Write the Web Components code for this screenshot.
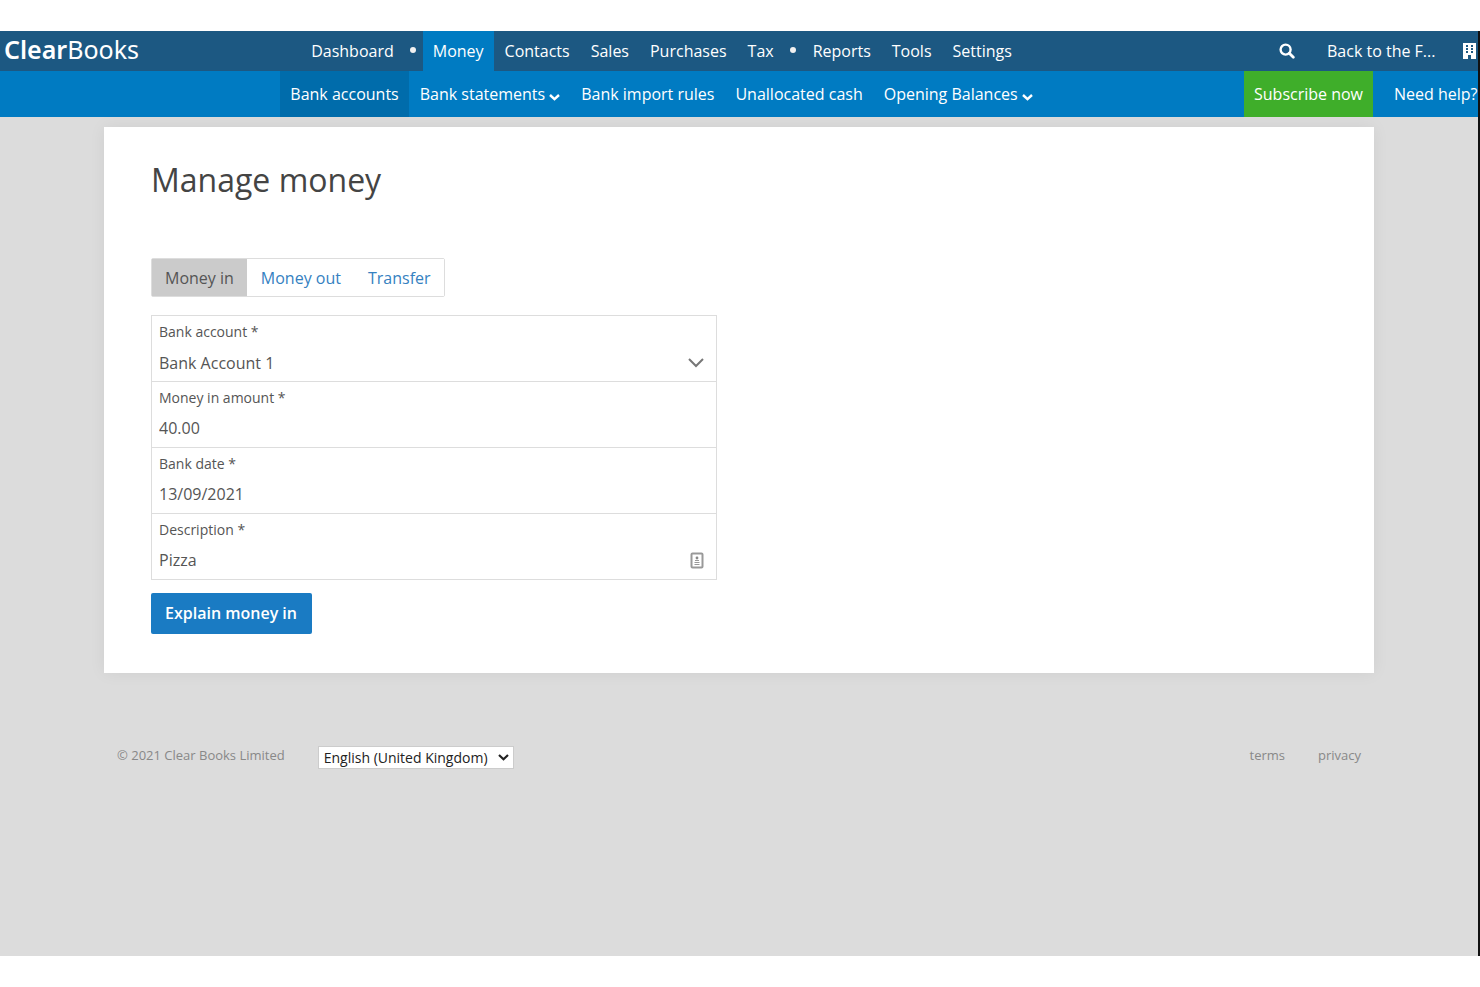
<!DOCTYPE html>
<html lang="en-GB">
<head>
<meta charset="utf-8">
<meta name="viewport" content="width=device-width, initial-scale=1">
<title>Manage money - Clear Books</title>
<style>
  body {
    margin: 0;
    background: #fff;
    color: #555;
    font-family: 'Open Sans', sans-serif;
    font-size: 16px;
    overflow-x: hidden;
  }
</style>
</head>
<body>
<clear-books-app></clear-books-app>

<script>
class NavItem extends HTMLElement {
  constructor() {
    super();
    this.attachShadow({ mode: 'open' });
  }

  connectedCallback() {
    const chevron = this.hasAttribute('menu')
      ? '<svg width="11" height="7" viewBox="0 0 11 7"><path d="M1 1l4.5 4.2L10 1" fill="none" stroke="currentColor" stroke-width="2.4"/></svg>'
      : '';

    this.shadowRoot.innerHTML = `
      <style>
        :host {
          display: flex;
        }
        a {
          display: flex;
          align-items: center;
          gap: 4px;
          padding: 0 10px;
          color: #fff;
          text-decoration: none;
          white-space: nowrap;
        }
        :host([active]) a {
          background: var(--active-bg);
        }
        :host([highlight]) a {
          background: #3fae2a;
        }
        svg {
          margin-top: 6px;
        }
      </style>
      <a href="${this.getAttribute('href') || '#'}"><slot></slot>${chevron}</a>
    `;
  }
}

class NavBar extends HTMLElement {
  constructor() {
    super();
    this.attachShadow({ mode: 'open' });
    this.shadowRoot.innerHTML = `
      <style>
        :host {
          display: grid;
          grid-template-columns: 140px 1fr 295px;
          height: var(--bar-height);
          background: var(--bar-bg);
          color: #fff;
          line-height: 22px;
        }
        nav {
          display: flex;
          justify-content: center;
          gap: 1px;
        }
        .actions {
          display: flex;
          padding-left: 61px;
          overflow: hidden;
        }
      </style>
      <div><slot name="brand"></slot></div>
      <nav><slot></slot></nav>
      <div class="actions"><slot name="actions"></slot></div>
    `;
  }
}

class BrandLogo extends HTMLElement {
  constructor() {
    super();
    this.attachShadow({ mode: 'open' });
    this.shadowRoot.innerHTML = `
      <style>
        :host {
          display: block;
        }
        a {
          display: block;
          padding-left: 4px;
          color: #fff;
          font-family: 'Noto Sans', sans-serif;
          font-size: 25px;
          line-height: 36px;
          text-decoration: none;
          white-space: nowrap;
        }
        b {
          font-weight: 600;
        }
      </style>
      <a href="#home"><b>Clear</b>Books</a>
    `;
  }
}

class TopTools extends HTMLElement {
  constructor() {
    super();
    this.attachShadow({ mode: 'open' });
    this.shadowRoot.innerHTML = `
      <style>
        :host {
          display: flex;
          align-items: center;
          padding-left: 35px;
        }
        button {
          display: flex;
          padding: 0;
          border: 0;
          background: none;
          color: inherit;
          cursor: pointer;
        }
        a {
          flex: none;
          margin: 0 28px 0 32px;
          color: inherit;
          text-decoration: none;
        }
      </style>
      <button aria-label="Search">
        <svg width="16" height="16" viewBox="0 0 16 16" fill="none" stroke="currentColor">
          <circle cx="6.6" cy="6.6" r="5" stroke-width="2.4"/>
          <path d="M10.3 10.3l4 4" stroke-width="2.8" stroke-linecap="round"/>
        </svg>
      </button>
      <a href="#business">Back to the F...</a>
      <button aria-label="Businesses">
        <svg width="13" height="16" viewBox="0 0 13 16">
          <path fill="currentColor" fill-rule="evenodd" d="M0 0h13v16H8v-4H5v4H0zM3 2v2h2V2zM8 2v2h2V2zM3 5v2h2V5zM8 5v2h2V5zM3 8v2h2V8zM8 8v2h2V8z"/>
        </svg>
      </button>
    `;
  }
}

class NavDot extends HTMLElement {
  constructor() {
    super();
    this.attachShadow({ mode: 'open' });
    this.shadowRoot.innerHTML = `
      <style>
        :host {
          display: flex;
          align-items: center;
          justify-content: center;
          width: 17px;
        }
        i {
          width: 6px;
          height: 6px;
          margin-bottom: 2px;
          border-radius: 50%;
          background: #f1f1f1;
        }
      </style>
      <i></i>
    `;
  }
}

class TabGroup extends HTMLElement {
  constructor() {
    super();
    this.attachShadow({ mode: 'open' });
  }

  connectedCallback() {
    const tabs = this.getAttribute('tabs').split(',');
    this.shadowRoot.innerHTML = `
      <style>
        :host {
          display: block;
        }
        div {
          display: inline-flex;
          gap: 1px;
          border: 1px solid #ddd;
          border-radius: 2px;
          vertical-align: top;
        }
        button {
          padding: 1px 13px 0;
          border: 0;
          background: #fff;
          color: #3581c1;
          font: inherit;
          line-height: 36px;
          cursor: pointer;
        }
        button[aria-selected="true"] {
          background: #cbcbcb;
          color: #555;
        }
      </style>
      <div role="tablist">
        ${tabs.map((tab, i) => `<button role="tab" aria-selected="${i === 0}">${tab}</button>`).join('')}
      </div>
    `;
    this.shadowRoot.querySelectorAll('button').forEach(button => {
      button.addEventListener('click', () => this.select(button));
    });
  }

  select(selected) {
    this.shadowRoot.querySelectorAll('button').forEach(button => {
      button.setAttribute('aria-selected', button === selected);
    });
  }
}

class FormField extends HTMLElement {
  constructor() {
    super();
    this.attachShadow({ mode: 'open' });
  }

  connectedCallback() {
    const value = this.getAttribute('value');
    let control = `<input id="control" type="text" value="${value}">`;
    let icon = '';

    if (this.getAttribute('type') === 'select') {
      control = `<select id="control"><option>${value}</option></select>`;
      icon = '<svg width="16" height="10" viewBox="0 0 16 10"><path d="M1 1l7 7 7-7" fill="none" stroke="#777" stroke-width="2"/></svg>';
    } else if (this.hasAttribute('autofill')) {
      icon = `
        <svg width="14" height="17" viewBox="0 0 14 17">
          <rect x="1.5" y="1.5" width="11" height="14" rx="1" fill="#fff" stroke="#999" stroke-width="2"/>
          <circle cx="7" cy="6" r="1.4" fill="#888"/>
          <path d="M5 8.5h4M4.5 10.5h5M4.5 12.5h5" stroke="#999"/>
        </svg>`;
    }

    this.shadowRoot.innerHTML = `
      <style>
        :host {
          display: block;
          padding: 6px 7px 0;
          border-bottom: 1px solid #ddd;
        }
        label {
          display: block;
          font-size: 14px;
          line-height: 20px;
        }
        .control {
          display: flex;
          align-items: center;
          height: 39px;
          padding-right: 4px;
        }
        input,
        select {
          flex: 1;
          min-width: 0;
          height: 28px;
          margin: 0;
          padding: 0;
          border: 0;
          outline: 0;
          appearance: none;
          background: transparent;
          color: inherit;
          font: inherit;
        }
        select {
          height: 30px;
          padding-top: 2px;
        }
        svg {
          flex: none;
          margin: 2px 1px 0 0;
          pointer-events: none;
        }
      </style>
      <label for="control">${this.getAttribute('label')} *</label>
      <div class="control">${control}${icon}</div>
    `;
  }
}

class MoneyForm extends HTMLElement {
  constructor() {
    super();
    this.attachShadow({ mode: 'open' });
    this.shadowRoot.innerHTML = `
      <style>
        :host {
          display: block;
        }
        .fields {
          max-width: 564px;
          margin: 18px 0 13px;
          border: 1px solid #ddd;
          border-bottom: 0;
        }
        button {
          padding: 0 15px 0 14px;
          border: 0;
          border-radius: 2px;
          background: #1a7bc3;
          color: #fff;
          font: inherit;
          font-weight: 600;
          line-height: 41px;
          cursor: pointer;
        }
      </style>
      <tab-group tabs="Money in,Money out,Transfer"></tab-group>
      <form>
        <div class="fields">
          <form-field type="select" label="Bank account" value="Bank Account 1"></form-field>
          <form-field label="Money in amount" value="40.00"></form-field>
          <form-field label="Bank date" value="13/09/2021"></form-field>
          <form-field label="Description" value="Pizza" autofill></form-field>
        </div>
        <button type="button">Explain money in</button>
      </form>
    `;
  }
}

class PageCard extends HTMLElement {
  constructor() {
    super();
    this.attachShadow({ mode: 'open' });
    this.shadowRoot.innerHTML = `
      <style>
        :host {
          display: block;
          padding: 31px 47px 39px;
          background: #fff;
          box-shadow: 0 0 16px rgba(0, 0, 0, 0.06);
        }
        h1 {
          margin: 0 0 56px;
          color: #444;
          font-size: 32px;
          font-weight: 400;
          line-height: 44px;
        }
      </style>
      <h1><slot name="title"></slot></h1>
      <slot></slot>
    `;
  }
}

class PageFooter extends HTMLElement {
  constructor() {
    super();
    this.attachShadow({ mode: 'open' });
    this.shadowRoot.innerHTML = `
      <style>
        :host {
          display: flex;
          align-items: flex-start;
          gap: 33px;
          padding: 0 13px;
          color: #888;
          font-size: 13px;
          line-height: 18px;
        }
        a {
          color: inherit;
          text-decoration: none;
        }
        .picker {
          display: grid;
          align-items: center;
        }
        .picker > * {
          grid-area: 1 / 1;
        }
        select {
          height: 23px;
          padding: 0 25px 0 5px;
          border: 1px solid #ccc;
          border-radius: 0;
          appearance: none;
          background: #fff;
          color: #222;
          font: inherit;
          font-size: 14px;
        }
        svg {
          justify-self: end;
          margin-right: 5px;
          pointer-events: none;
        }
        .links {
          display: flex;
          gap: 33px;
          margin-left: auto;
        }
      </style>
      <span>© 2021 Clear Books Limited</span>
      <div class="picker">
        <select aria-label="Language"><option>English (United Kingdom)</option></select>
        <svg width="11" height="7" viewBox="0 0 11 7"><path d="M1 1l4.5 4.2L10 1" fill="none" stroke="#222" stroke-width="2.2"/></svg>
      </div>
      <div class="links">
        <a href="#terms">terms</a>
        <a href="#privacy">privacy</a>
      </div>
    `;
  }
}

class ClearBooksApp extends HTMLElement {
  constructor() {
    super();
    this.attachShadow({ mode: 'open' });
    this.shadowRoot.innerHTML = `
      <style>
        :host {
          display: block;
          box-sizing: border-box;
          min-height: calc(100vh - 62px);
          margin: 31px 0;
          border-right: 2px solid #111;
          background: #dcdcdc;
        }
        .primary {
          --bar-height: 40px;
          --bar-bg: #1c5882;
          --active-bg: #007bc2;
        }
        .secondary {
          --bar-height: 46px;
          --bar-bg: #007bc2;
          --active-bg: #006cab;
        }
        .help {
          margin-left: 11px;
        }
        main,
        page-footer {
          margin: 0 104px;
        }
        main {
          padding: 10px 0 73px;
        }
      </style>
      <header>
        <nav-bar class="primary">
          <brand-logo slot="brand"></brand-logo>
          <nav-item href="#dashboard">Dashboard</nav-item>
          <nav-dot></nav-dot>
          <nav-item href="#money" active>Money</nav-item>
          <nav-item href="#contacts">Contacts</nav-item>
          <nav-item href="#sales">Sales</nav-item>
          <nav-item href="#purchases">Purchases</nav-item>
          <nav-item href="#tax">Tax</nav-item>
          <nav-dot></nav-dot>
          <nav-item href="#reports">Reports</nav-item>
          <nav-item href="#tools">Tools</nav-item>
          <nav-item href="#settings">Settings</nav-item>
          <top-tools slot="actions"></top-tools>
        </nav-bar>
        <nav-bar class="secondary">
          <nav-item href="#accounts" active>Bank accounts</nav-item>
          <nav-item href="#statements" menu>Bank statements</nav-item>
          <nav-item href="#rules">Bank import rules</nav-item>
          <nav-item href="#unallocated">Unallocated cash</nav-item>
          <nav-item href="#opening" menu>Opening Balances</nav-item>
          <nav-item slot="actions" href="#subscribe" highlight>Subscribe now</nav-item>
          <nav-item slot="actions" class="help" href="#help">Need help?</nav-item>
        </nav-bar>
      </header>
      <main>
        <page-card>
          <span slot="title">Manage money</span>
          <money-form></money-form>
        </page-card>
      </main>
      <page-footer></page-footer>
    `;
  }
}

customElements.define('nav-item', NavItem);
customElements.define('nav-bar', NavBar);
customElements.define('brand-logo', BrandLogo);
customElements.define('top-tools', TopTools);
customElements.define('nav-dot', NavDot);
customElements.define('tab-group', TabGroup);
customElements.define('form-field', FormField);
customElements.define('money-form', MoneyForm);
customElements.define('page-card', PageCard);
customElements.define('page-footer', PageFooter);
customElements.define('clear-books-app', ClearBooksApp);
</script>
</body>
</html>
